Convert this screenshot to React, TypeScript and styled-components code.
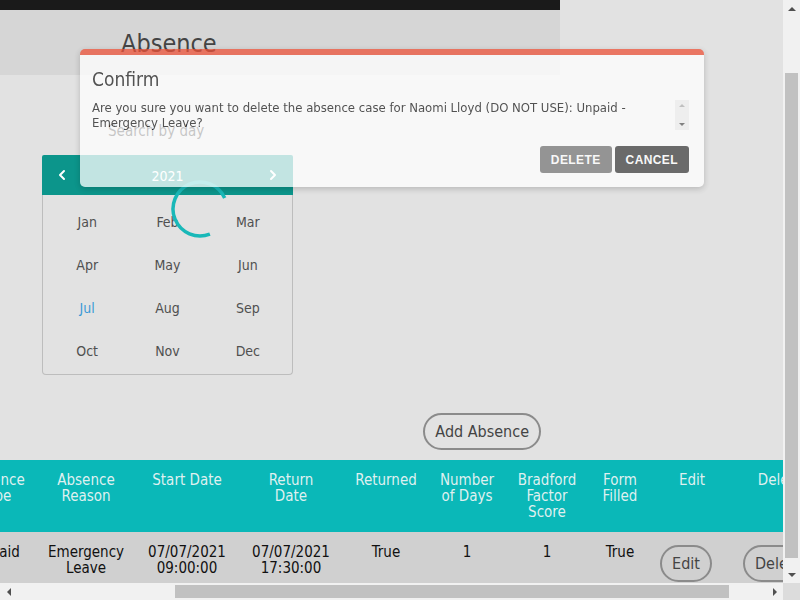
import React, { useLayoutEffect, useRef } from "react";
import styled, { createGlobalStyle } from "styled-components";
import { ChevronLeft, ChevronRight } from "lucide-react";

const GlobalStyle = createGlobalStyle`
  html, body {
    margin: 0;
    padding: 0;
    overflow: hidden;
  }
  body {
    font-family: "DejaVu Sans Condensed", "DejaVu Sans", sans-serif;
    background: #e2e2e2;
  }
`;

const Frame = styled.div`
  display: grid;
  grid-template-columns: 783px 17px;
  grid-template-rows: 583px 17px;
  width: 800px;
  height: 600px;
  background: #e2e2e2;
`;

const Main = styled.div`
  position: relative;
  overflow: hidden;
  display: flex;
  flex-direction: column;
`;

const TopBar = styled.div`
  width: 560px;
  height: 10px;
  flex-shrink: 0;
  background: #1a1a1a;
`;

const HeaderBand = styled.div`
  width: 560px;
  height: 65px;
  flex-shrink: 0;
  box-sizing: border-box;
  padding: 20px 0 0 121px;
  background: #d6d6d6;
`;

const Title = styled.h1`
  margin: 0;
  font-size: 25px;
  font-weight: normal;
  line-height: 28px;
  color: #444;
`;

const SearchField = styled.input`
  margin: 41px 0 0 96px;
  width: 300px;
  height: 30px;
  flex-shrink: 0;
  box-sizing: border-box;
  padding: 0 12px;
  border: none;
  background: transparent;
  font-family: inherit;
  font-size: 15px;
  outline: none;
  &::placeholder {
    color: #1a1a1a;
  }
`;

const Calendar = styled.div`
  margin: 9px 0 0 42px;
  width: 251px;
  flex-shrink: 0;
`;

const CalHeader = styled.div`
  height: 40px;
  display: flex;
  align-items: center;
  justify-content: space-between;
  padding: 0 12px;
  background: #0c958b;
  color: #fff;
  font-size: 14px;
  border-radius: 2px 2px 0 0;
`;

const Year = styled.span`
  padding-top: 2px;
`;

const CalBody = styled.div`
  display: grid;
  grid-template-columns: repeat(3, 1fr);
  grid-auto-rows: 43px;
  padding: 5px 4px 2px;
  border: 1px solid #bdbdbd;
  border-top: none;
  border-radius: 0 0 4px 4px;
`;

const Month = styled.div<{ $active?: boolean }>`
  display: flex;
  align-items: center;
  justify-content: center;
  font-size: 14px;
  color: ${(p) => (p.$active ? "#3a9ad6" : "#505050")};
`;

const AddRow = styled.div`
  width: 560px;
  margin-top: 38px;
  flex-shrink: 0;
  display: flex;
  justify-content: flex-end;
  padding-right: 19px;
  box-sizing: border-box;
`;

const PillButton = styled.button`
  height: 37px;
  box-sizing: border-box;
  padding: 0 10px;
  border: 2px solid #8b8b8b;
  border-radius: 19px;
  background: transparent;
  font-family: inherit;
  font-size: 16px;
  color: #444;
`;

const RowButton = styled(PillButton)`
  margin: 1px 12px 0 0;
`;

const TableWrap = styled.div`
  margin-top: 10px;
  width: 783px;
  overflow: hidden;
  flex-shrink: 0;
`;

const Table = styled.table`
  border-collapse: collapse;
  table-layout: fixed;
  width: 872px;
`;

const Th = styled.th<{ $pad: number }>`
  background: #0ab8b8;
  color: #dff0f0;
  font-weight: normal;
  font-size: 15px;
  line-height: 16px;
  padding: 12px ${(p) => p.$pad}px 12px;
  height: 48px;
  vertical-align: top;
  text-align: center;
`;

const Td = styled.td`
  background: #d0d0d0;
  color: #111;
  font-size: 15px;
  line-height: 16px;
  padding: 12px 8px 13px;
  vertical-align: top;
  text-align: center;
`;

const Overlay = styled.div`
  position: absolute;
  left: 80px;
  top: 49px;
  width: 624px;
  opacity: 0.75;
  background: #fff;
  border-top: 6px solid #ec5238;
  border-radius: 5px;
  box-shadow: 0 2px 6px rgba(0, 0, 0, 0.25);
  box-sizing: border-box;
  padding: 12px 15px 14px 12px;
  color: #222;
`;

const DialogTitle = styled.div`
  font-size: 19px;
  line-height: 24px;
`;

const MessageBox = styled.div`
  margin-top: 9px;
  height: 30px;
  display: flex;
  font-size: 13px;
  line-height: 15px;
`;

const MessageText = styled.div`
  flex: 1;
  overflow: hidden;
`;

const MiniScroll = styled.div`
  width: 14px;
  margin-left: 1px;
  background: #f2f2f2;
  display: flex;
  flex-direction: column;
  justify-content: space-between;
  align-items: center;
  padding: 4px 0;
  box-sizing: border-box;
`;

const Tri = styled.span<{ $dir: "up" | "down" | "left" | "right"; $color: string; $size?: number }>`
  width: 0;
  height: 0;
  border: ${(p) => p.$size ?? 4}px solid transparent;
  ${(p) =>
    p.$dir === "up"
      ? `border-bottom-color: ${p.$color}; border-top-width: 0;`
      : p.$dir === "down"
      ? `border-top-color: ${p.$color}; border-bottom-width: 0;`
      : p.$dir === "left"
      ? `border-right-color: ${p.$color}; border-left-width: 0;`
      : `border-left-color: ${p.$color}; border-right-width: 0;`}
`;

const DialogActions = styled.div`
  margin-top: 16px;
  display: flex;
  justify-content: flex-end;
  gap: 3px;
`;

const DialogButton = styled.button<{ $dark?: boolean }>`
  height: 27px;
  padding: 0 11px;
  border: none;
  border-radius: 3px;
  background: ${(p) => (p.$dark ? "#424242" : "#7a7a7a")};
  color: #fff;
  font-family: "Liberation Sans", Arial, sans-serif;
  font-weight: bold;
  font-size: 12px;
  letter-spacing: 0.4px;
`;

const Spinner = styled.svg`
  position: absolute;
  left: 168px;
  top: 177px;
`;

const VScroll = styled.div`
  background: #f1f1f1;
  display: flex;
  flex-direction: column;
  align-items: center;
`;

const HScroll = styled.div`
  background: #f1f1f1;
  display: flex;
  align-items: center;
`;

const ArrowCell = styled.div`
  width: 17px;
  height: 17px;
  flex-shrink: 0;
  display: flex;
  align-items: center;
  justify-content: center;
`;

const VThumb = styled.div`
  margin-top: 56px;
  width: 13px;
  height: 485px;
  background: #c1c1c1;
`;

const HThumb = styled.div`
  margin-left: 158px;
  width: 554px;
  height: 13px;
  background: #c1c1c1;
`;

const Grow = styled.div`
  flex: 1;
`;

const Corner = styled.div`
  background: #dcdcdc;
`;

const months = ["Jan", "Feb", "Mar", "Apr", "May", "Jun", "Jul", "Aug", "Sep", "Oct", "Nov", "Dec"];

const columns: { label: string; width: number; pad: number }[] = [
  { label: "Absence Type", width: 86, pad: 8 },
  { label: "Absence Reason", width: 94, pad: 8 },
  { label: "Start Date", width: 108, pad: 8 },
  { label: "Return Date", width: 100, pad: 14 },
  { label: "Returned", width: 90, pad: 8 },
  { label: "Number of Days", width: 72, pad: 6 },
  { label: "Bradford Factor Score", width: 88, pad: 8 },
  { label: "Form Filled", width: 58, pad: 6 },
  { label: "Edit", width: 86, pad: 8 },
  { label: "Delete", width: 90, pad: 8 },
];

export default function App() {
  const tableRef = useRef<HTMLDivElement>(null);

  useLayoutEffect(() => {
    if (tableRef.current) tableRef.current.scrollLeft = 47;
  }, []);

  return (
    <>
      <GlobalStyle />
      <Frame>
        <Main>
          <TopBar />
          <HeaderBand>
            <Title>Absence</Title>
          </HeaderBand>

          <SearchField placeholder="Search by day" />

          <Calendar>
            <CalHeader>
              <ChevronLeft size={16} strokeWidth={3} />
              <Year>2021</Year>
              <ChevronRight size={16} strokeWidth={3} />
            </CalHeader>
            <CalBody>
              {months.map((m) => (
                <Month key={m} $active={m === "Jul"}>
                  {m}
                </Month>
              ))}
            </CalBody>
          </Calendar>

          <AddRow>
            <PillButton>Add Absence</PillButton>
          </AddRow>

          <TableWrap ref={tableRef}>
            <Table>
              <colgroup>
                {columns.map((c) => (
                  <col key={c.label} style={{ width: c.width }} />
                ))}
              </colgroup>
              <thead>
                <tr>
                  {columns.map((c) => (
                    <Th key={c.label} $pad={c.pad}>
                      {c.label}
                    </Th>
                  ))}
                </tr>
              </thead>
              <tbody>
                <tr>
                  <Td>Unpaid</Td>
                  <Td>Emergency Leave</Td>
                  <Td>
                    07/07/2021
                    <br />
                    09:00:00
                  </Td>
                  <Td>
                    07/07/2021
                    <br />
                    17:30:00
                  </Td>
                  <Td>True</Td>
                  <Td>1</Td>
                  <Td>1</Td>
                  <Td>True</Td>
                  <Td>
                    <RowButton>Edit</RowButton>
                  </Td>
                  <Td>
                    <RowButton>Delete</RowButton>
                  </Td>
                </tr>
              </tbody>
            </Table>
          </TableWrap>

          <Spinner width="64" height="64" viewBox="0 0 64 64">
            <path
              d="M 41.9 57.1 A 27 27 0 1 1 56.7 21.0"
              fill="none"
              stroke="#19b8b8"
              strokeWidth="3.5"
            />
          </Spinner>

          <Overlay>
            <DialogTitle>Confirm</DialogTitle>
            <MessageBox>
              <MessageText>
                Are you sure you want to delete the absence case for Naomi Lloyd (DO NOT USE): Unpaid - Emergency Leave?
              </MessageText>
              <MiniScroll>
                <Tri $dir="up" $color="#b5b5b5" $size={3} />
                <Tri $dir="down" $color="#606060" $size={3} />
              </MiniScroll>
            </MessageBox>
            <DialogActions>
              <DialogButton>DELETE</DialogButton>
              <DialogButton $dark>CANCEL</DialogButton>
            </DialogActions>
          </Overlay>
        </Main>

        <VScroll>
          <ArrowCell>
            <Tri $dir="up" $color="#505050" />
          </ArrowCell>
          <VThumb />
          <Grow />
          <ArrowCell>
            <Tri $dir="down" $color="#505050" />
          </ArrowCell>
        </VScroll>

        <HScroll>
          <ArrowCell>
            <Tri $dir="left" $color="#505050" />
          </ArrowCell>
          <HThumb />
          <Grow />
          <ArrowCell>
            <Tri $dir="right" $color="#505050" />
          </ArrowCell>
        </HScroll>
        <Corner />
      </Frame>
    </>
  );
}
